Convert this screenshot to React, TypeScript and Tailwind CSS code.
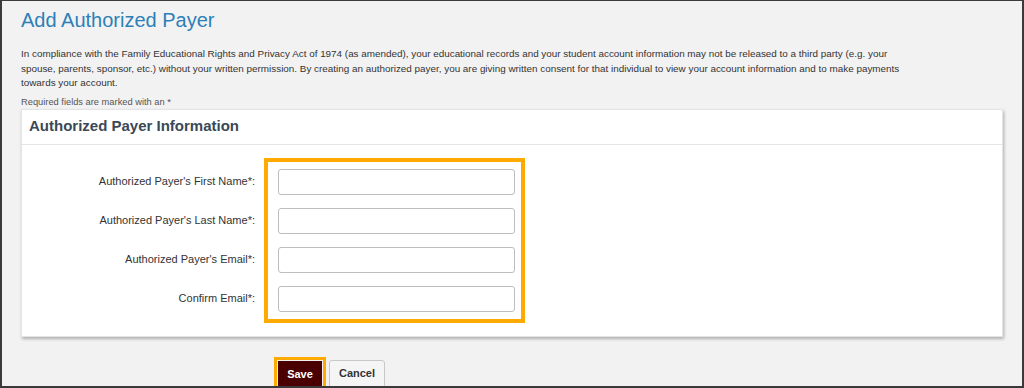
import React from 'react';

const fields = [
  "Authorized Payer's First Name*:",
  "Authorized Payer's Last Name*:",
  "Authorized Payer's Email*:",
  'Confirm Email*:',
];

const App: React.FC = () => {
  return (
    <div
      className="w-[1024px] h-[388px] overflow-hidden bg-[#f2f2f2] border-t border-l-2 border-r-2 border-b-2 border-[#3a3a3a] text-[#333]"
      style={{ fontFamily: '"Liberation Sans", Arial, sans-serif' }}
    >
      <div className="pl-[19px] pr-[19px] pt-[7px]">
        <h1 className="text-[20px] leading-[24px] text-[#2d7fb8] font-normal">Add Authorized Payer</h1>

        <p className="mt-[15px] text-[9.9px] leading-[14.5px] text-[#333] max-w-[898px]">
          In compliance with the Family Educational Rights and Privacy Act of 1974 (as amended), your educational
          records and your student account information may not be released to a third party (e.g. your spouse,
          parents, sponsor, etc.) without your written permission. By creating an authorized payer, you are giving
          written consent for that individual to view your account information and to make payments towards your
          account.
        </p>

        <div className="mt-[5px] text-[9.3px] leading-[12px] text-[#555]">Required fields are marked with an *</div>

        {/* card */}
        <div className="mt-[1px] bg-white border border-[#e2e4e6] shadow-[1px_2px_3px_rgba(0,0,0,0.28)]">
          <div className="h-[35px] px-[7px] flex items-center border-b border-[#e3e6e8]">
            <h2 className="text-[15px] font-bold text-[#3b4856]">Authorized Payer Information</h2>
          </div>

          <div className="flex pt-[13px] pb-[13px]">
            <div className="w-[234px] pr-[1px] pt-[11px] flex flex-col gap-[13px]">
              {fields.map((f) => (
                <div key={f} className="h-[26px] flex items-center justify-end text-[11px] text-[#333]">
                  {f}
                </div>
              ))}
            </div>

            <div className="ml-[8px] w-[261px] border-4 border-[#ffaa00] px-[10px] pt-[7px] pb-[7px] flex flex-col gap-[13px]">
              {fields.map((f) => (
                <input
                  key={f}
                  type="text"
                  aria-label={f}
                  className="h-[26px] w-[237px] bg-white border border-[#bdbdbd] rounded-[3px] outline-none"
                />
              ))}
            </div>
          </div>
        </div>

        {/* buttons */}
        <div className="mt-[20px] ml-[253px] flex items-start">
          <div className="border-[3px] border-[#ffaa00] p-[1px]">
            <button className="h-[26px] w-[44px] bg-[#4a0000] text-white text-[11px] font-bold">Save</button>
          </div>
          <button className="ml-[3px] mt-[3px] h-[28px] w-[56px] bg-[#f5f5f5] border border-[#c8c8c8] rounded-[3px] text-[11px] font-bold text-[#333]">
            Cancel
          </button>
        </div>
      </div>
    </div>
  );
};

export default App;
